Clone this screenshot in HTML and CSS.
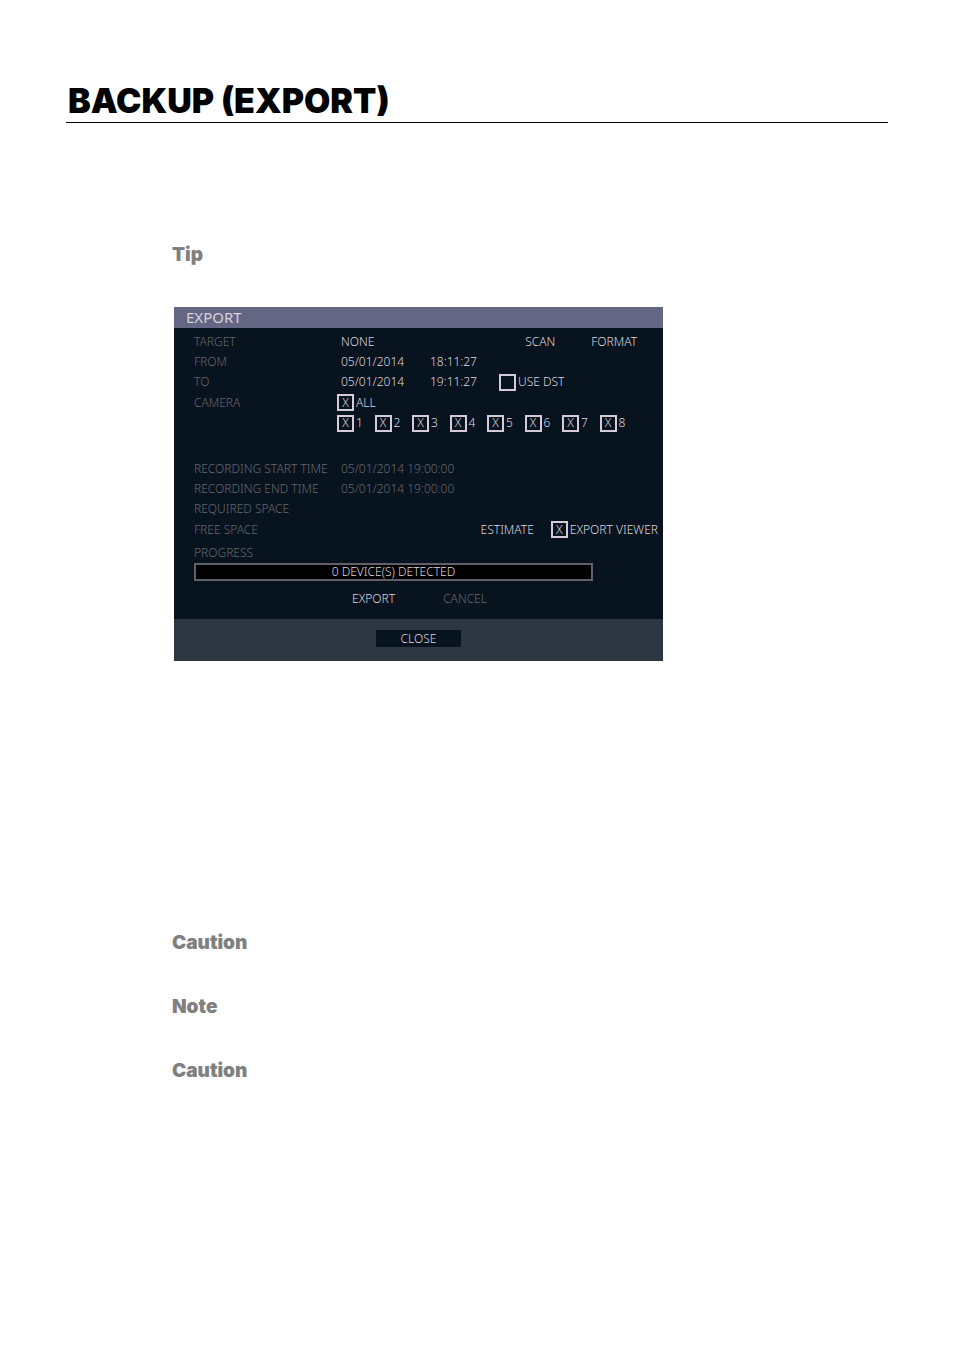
FILE: index.html
```html
<!DOCTYPE html>
<html lang="en">
<head>
<meta charset="utf-8">
<meta name="viewport" content="width=device-width, initial-scale=1">
<title>Backup (Export)</title>
<link rel="stylesheet" href="styles.css">
</head>
<body>
<main class="page">
  <h1 class="page-title">BACKUP (EXPORT)</h1>
  <div class="content">
    <h2 class="callout callout-tip">Tip</h2>

    <form class="dialog">
      <h3 class="dialog-title">EXPORT</h3>
      <div class="dialog-body">
        <div class="row">
          <label for="target">TARGET</label>
          <select id="target" class="field"><option>NONE</option></select>
          <div class="actions actions-device">
            <button type="button" class="text-button">SCAN</button>
            <button type="button" class="text-button">FORMAT</button>
          </div>
        </div>
        <div class="row">
          <label for="from-date">FROM</label>
          <input id="from-date" class="field" type="text" value="05/01/2014">
          <input class="field" type="text" value="18:11:27" aria-label="From time">
        </div>
        <div class="row">
          <label for="to-date">TO</label>
          <input id="to-date" class="field" type="text" value="05/01/2014">
          <input class="field" type="text" value="19:11:27" aria-label="To time">
          <label class="check"><input type="checkbox">USE DST</label>
        </div>
        <div class="row row-camera">
          <span>CAMERA</span>
          <label class="check check-all"><input type="checkbox" checked>ALL</label>
        </div>
        <div class="cameras">
          <label class="check"><input type="checkbox" checked>1</label>
          <label class="check"><input type="checkbox" checked>2</label>
          <label class="check"><input type="checkbox" checked>3</label>
          <label class="check"><input type="checkbox" checked>4</label>
          <label class="check"><input type="checkbox" checked>5</label>
          <label class="check"><input type="checkbox" checked>6</label>
          <label class="check"><input type="checkbox" checked>7</label>
          <label class="check"><input type="checkbox" checked>8</label>
        </div>
        <div class="row"><span>RECORDING START TIME</span><span class="wide">05/01/2014 19:00:00</span></div>
        <div class="row"><span>RECORDING END TIME</span><span class="wide">05/01/2014 19:00:00</span></div>
        <div class="row"><span>REQUIRED SPACE</span></div>
        <div class="row row-space">
          <span>FREE SPACE</span>
          <div class="actions actions-estimate">
            <button type="button" class="text-button">ESTIMATE</button>
            <label class="check"><input type="checkbox" checked>EXPORT VIEWER</label>
          </div>
        </div>
        <div class="row row-progress"><span>PROGRESS</span></div>
        <div class="progress" role="status">0 DEVICE(S) DETECTED</div>
        <div class="commands">
          <button type="button" class="text-button">EXPORT</button>
          <button type="button" class="text-button" disabled>CANCEL</button>
        </div>
      </div>
      <div class="dialog-footer">
        <button type="button" class="close-button">CLOSE</button>
      </div>
    </form>

    <h2 class="callout callout-first">Caution</h2>
    <h2 class="callout">Note</h2>
    <h2 class="callout">Caution</h2>
  </div>
</main>
</body>
</html>
```
FILE: styles.css
```css
* {
  box-sizing: border-box;
}

body {
  margin: 0;
  background: #fff;
}

.page {
  padding: 80px 66px 264px;
}

.page-title {
  margin: 0;
  padding-left: 2px;
  border-bottom: 1px solid #000;
  font: 900 34px/42px Inter, sans-serif;
  color: #000;
}

.content {
  padding-left: 106px;
}

.callout {
  margin: 0 0 40px;
  font: 900 19px/24px Inter, sans-serif;
  color: #808080;
}

.callout-tip {
  margin: 120px 0 40px;
}

.callout-first {
  margin-top: 270px;
}

.dialog {
  max-width: 489px;
  margin-left: 2px;
  background: #07131f;
  color: #68686b;
  font: 300 12px/20px "Noto Sans", sans-serif;
}

.dialog-title {
  margin: 0;
  padding-left: 12px;
  background: #646783;
  color: #d8d0dc;
  font-size: 15px;
  font-weight: 400;
  line-height: 21px;
}

.dialog-body {
  padding: 4px 0 10px 20px;
}

.row {
  display: grid;
  grid-template-columns: 147px 89px 69px 1fr;
  align-items: center;
  height: 20px;
}

.row-camera,
.row-space {
  height: 21px;
}

.row-progress {
  height: 23px;
  padding-top: 2px;
}

.wide {
  grid-column: 2 / 4;
}

.field,
.text-button,
.close-button {
  min-width: 0;
  padding: 0;
  border: 0;
  background: none;
  color: #ded6df;
  font: inherit;
  appearance: none;
}

.field {
  width: 100%;
}

.text-button:disabled {
  color: #68686b;
}

.actions {
  display: flex;
  justify-content: flex-end;
  grid-column: 3 / 5;
}

.actions-device {
  gap: 36px;
  padding-right: 26px;
}

.actions-estimate {
  gap: 17px;
  padding-right: 5px;
}

.check {
  display: flex;
  align-items: center;
  gap: 2px;
  color: #ded6df;
  white-space: nowrap;
}

.check input {
  display: grid;
  place-items: center;
  flex: none;
  width: 17px;
  height: 17px;
  margin: 0;
  border: 2px solid #d5cbd8;
  background: #07131f;
  appearance: none;
}

.check input:checked::before {
  content: "X";
  color: #ded6df;
  font: 300 12px/12px "Noto Sans", sans-serif;
}

.check-all {
  margin-left: -4px;
}

.cameras {
  display: grid;
  grid-template-columns: repeat(8, 1fr);
  max-width: 300px;
  height: 20px;
  margin: 0 0 26px 143px;
}

.progress {
  width: 399px;
  max-width: 100%;
  border: 2px solid #626064;
  background: #000;
  color: #ded6df;
  line-height: 14px;
  text-align: center;
}

.commands {
  display: flex;
  justify-content: center;
  gap: 48px;
  margin: 8px 18px 0 0;
}

.dialog-footer {
  display: flex;
  justify-content: center;
  padding: 11px 0 14px;
  background: #2c3741;
}

.close-button {
  width: 85px;
  background: #07131f;
  line-height: 17px;
}
```
